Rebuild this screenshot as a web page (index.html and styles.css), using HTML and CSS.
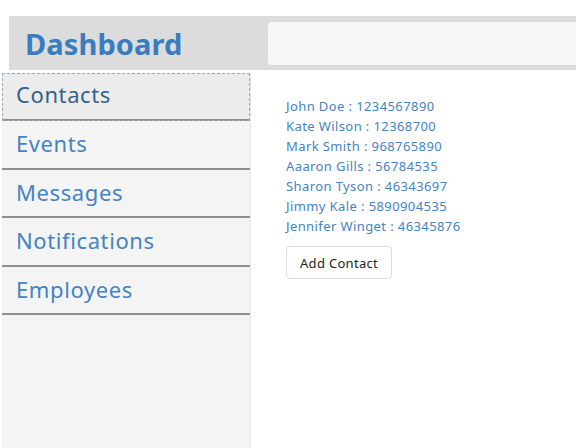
FILE: index.html
```html
<!DOCTYPE html>
<html>
<head>
<meta charset="utf-8">
<link rel="stylesheet" href="styles.css">
</head>
<body>
<header class="topbar">
  <h1 class="brand">Dashboard</h1>
  <input class="search" type="text">
</header>
<div class="main">
  <nav class="sidebar">
    <a class="nav-item active">Contacts</a>
    <a class="nav-item">Events</a>
    <a class="nav-item">Messages</a>
    <a class="nav-item">Notifications</a>
    <a class="nav-item">Employees</a>
  </nav>
  <section class="content">
    <ul class="contacts">
      <li>John Doe : 1234567890</li>
      <li>Kate Wilson : 12368700</li>
      <li>Mark Smith : 968765890</li>
      <li>Aaaron Gills : 56784535</li>
      <li>Sharon Tyson : 46343697</li>
      <li>Jimmy Kale : 5890904535</li>
      <li>Jennifer Winget : 46345876</li>
    </ul>
    <button class="add-btn">Add Contact</button>
  </section>
</div>
</body>
</html>
```
FILE: styles.css
```css
html, body {
  margin: 0;
  padding: 0;
  height: 100%;
}
body {
  font-family: "Noto Sans", "Noto Sans CJK JP", sans-serif;
  background: #fff;
  display: flex;
  flex-direction: column;
  overflow: hidden;
}
.topbar {
  margin: 16px 0 0 9px;
  height: 54px;
  background: #dcdcdc;
  display: flex;
  align-items: center;
  flex-shrink: 0;
}
.brand {
  margin: 0 0 0 16px;
  width: 243px;
  font-size: 29px;
  font-weight: bold;
  color: #3a7cc0;
  letter-spacing: 0.1px;
}
.search {
  flex: 1;
  height: 43px;
  box-sizing: border-box;
  border: none;
  border-radius: 4px 0 0 4px;
  background: #f7f7f7;
  margin-right: -10px;
}
.main {
  display: flex;
  flex: 1;
  margin-top: 3px;
}
.sidebar {
  width: 248px;
  margin-left: 2px;
  background: #f4f4f4;
  border-right: 1px solid #e6e6e6;
  display: flex;
  flex-direction: column;
}
.nav-item {
  display: block;
  height: 46.6px;
  line-height: 44px;
  padding-left: 14px;
  font-size: 22px;
  color: #4483c4;
  border-bottom: 2px solid #8e8e8e;
  box-sizing: content-box;
  letter-spacing: 0.6px;
}
.nav-item.active {
  background: #ececec;
  color: #33628f;
  outline: 1px dashed #9aaab8;
  outline-offset: -1px;
  height: 46px;
  line-height: 43px;
}
.content {
  padding: 23px 0 0 35px;
}
.contacts {
  list-style: none;
  margin: 0;
  padding: 0;
}
.contacts li {
  font-size: 13px;
  line-height: 20px;
  color: #4483c4;
  letter-spacing: 0.4px;
}
.add-btn {
  margin-top: 10px;
  height: 33px;
  padding: 0 13px;
  background: #fff;
  border: 1px solid #dcdcdc;
  border-radius: 4px;
  font-family: inherit;
  font-size: 13px;
  color: #222;
  letter-spacing: 0.3px;
}
```
